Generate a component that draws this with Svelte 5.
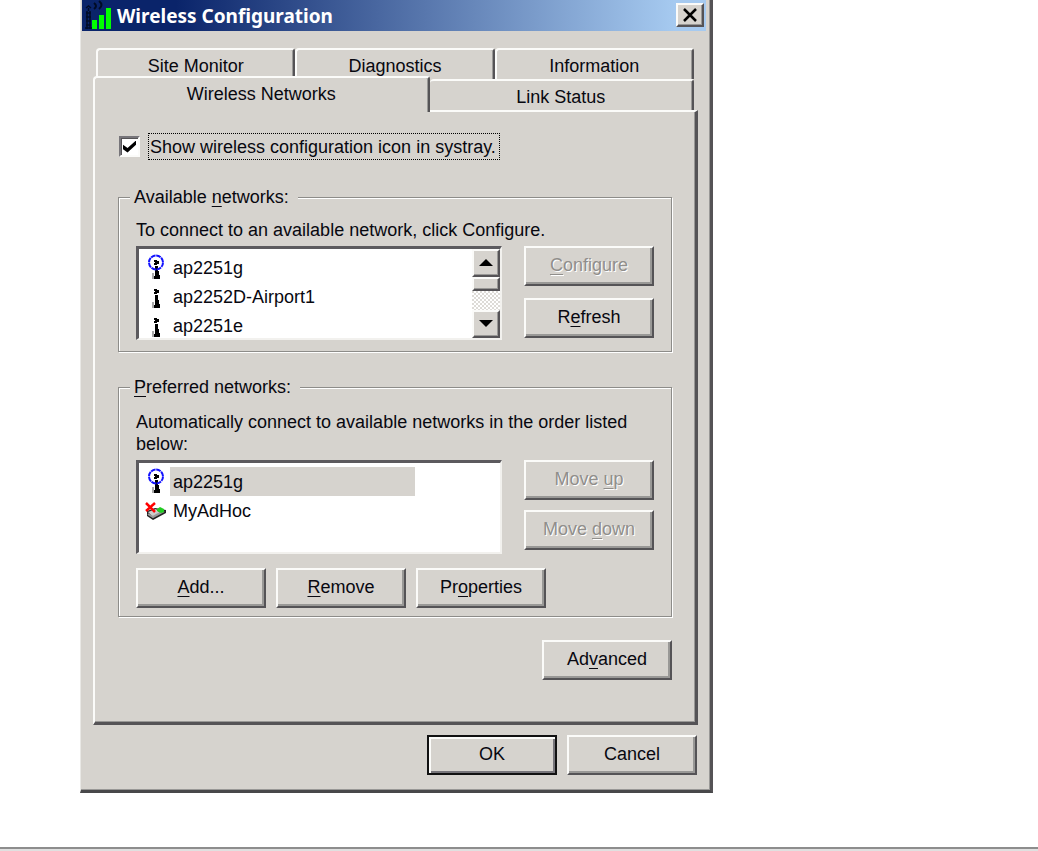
<script>
  let showIcon = $state(true);

  const backTabs = ['Site Monitor', 'Diagnostics', 'Information'];

  const available = [
    { name: 'ap2251g', icon: 'active' },
    { name: 'ap2252D-Airport1', icon: 'tower' },
    { name: 'ap2251e', icon: 'tower' }
  ];

  let preferred = [
    { name: 'ap2251g', icon: 'active' },
    { name: 'MyAdHoc', icon: 'adhoc' }
  ];

  let selected = $state(0);
</script>

{#snippet networkIcon(kind)}
  <svg class="icon" width="24" height="26" viewBox="0 0 24 26" aria-hidden="true">
    {#if kind === 'adhoc'}
      <path d="M3 13l8-3 11 2v3l-13 7-6-4z" fill="#222" />
      <path d="M4 14l8-3 4 4-7 4z" fill="#ccc" />
      <path d="M4 16l5 3 11-6" fill="none" stroke="#999" stroke-width="2" />
      <path d="M13 11l3-2 4 2v3l-3 1-4-2z" fill="#2c2" />
      <path d="M2 5l9 9M11 5l-9 8" stroke="#f00" stroke-width="2.500" />
    {:else}
      <path d="M10 5h3v1h2v3h-2v1h-3V8h1V7h-1z" fill="#000" />
      <path d="M11 11h3v5h1v4h1v4h-6v-3h1z" fill="#000" />
      <path d="M8 18h2v6H8z" fill="#aaa" />
      {#if kind === 'active'}
        <circle cx="12" cy="7.500" r="7" fill="none" stroke="#11f" stroke-width="2" stroke-dasharray="4.800 .700" />
      {/if}
    {/if}
  </svg>
{/snippet}

<div class="dialog" role="dialog" aria-labelledby="title">
  <header>
    <svg width="30" height="31" viewBox="0 0 30 31" aria-hidden="true">
      <path d="M5 29V11M8 29V11M4 13h5M4 17h5M4 21h5M4 25h5M3 28h7M6.500 11V8M4 8l2.500-2L9 8" fill="none" stroke="#000b25" stroke-width="1.500" />
      <path d="M12 3q4 3 0 6M17 1q5 4 0 8" fill="none" stroke="#000b25" stroke-width="2" />
      <path d="M10 20h5v9h-5zM17 15h5v14h-5zM24 8h5v21h-5z" fill="#0f0" />
    </svg>
    <h1 id="title">Wireless Configuration</h1>
    <button class="close" aria-label="Close">
      <svg width="16" height="14" viewBox="0 0 16 14"><path d="M2 1l12 12M14 1L2 13" stroke="#000" stroke-width="2.500" /></svg>
    </button>
  </header>

  <div class="tabs" role="tablist">
    <div class="row back">
      {#each backTabs as tab}
        <button class="tab" role="tab" aria-selected="false">{tab}</button>
      {/each}
    </div>
    <div class="row front">
      <button class="tab current" role="tab" aria-selected="true">Wireless Networks</button>
      <button class="tab link" role="tab" aria-selected="false">Link Status</button>
    </div>
  </div>

  <section class="panel" role="tabpanel">
    <div class="check">
      <input id="systray" type="checkbox" bind:checked={showIcon} />
      <label for="systray">Show wireless configuration icon in systray.</label>
    </div>

    <fieldset>
      <legend>Available <u>n</u>etworks:</legend>
      <p>To connect to an available network, click Configure.</p>
      <div class="columns">
        <div class="list">
          <ul>
            {#each available as net}
              <li>{@render networkIcon(net.icon)}<span class="name">{net.name}</span></li>
            {/each}
          </ul>
          <div class="scrollbar">
            <button aria-label="Scroll up">
              <svg width="14" height="8" viewBox="0 0 14 8"><path d="M7 0l7 7H0z" /></svg>
            </button>
            <div class="thumb"></div>
            <div class="track"></div>
            <button aria-label="Scroll down">
              <svg width="14" height="8" viewBox="0 0 14 8"><path d="M0 0h14L7 7z" /></svg>
            </button>
          </div>
        </div>
        <div class="side">
          <button class="btn" disabled><u>C</u>onfigure</button>
          <button class="btn">R<u>e</u>fresh</button>
        </div>
      </div>
    </fieldset>

    <fieldset class="preferred">
      <legend><u>P</u>referred networks:</legend>
      <p>Automatically connect to available networks in the order listed below:</p>
      <div class="columns">
        <div class="list">
          <ul>
            {#each preferred as net, i}
              <li>
                {@render networkIcon(net.icon)}
                <button class="name" class:selected={selected === i} onclick={() => (selected = i)}>{net.name}</button>
              </li>
            {/each}
          </ul>
        </div>
        <div class="side">
          <button class="btn" disabled>Move <u>u</u>p</button>
          <button class="btn" disabled>Move <u>d</u>own</button>
        </div>
      </div>
      <div class="actions">
        <button class="btn"><u>A</u>dd...</button>
        <button class="btn"><u>R</u>emove</button>
        <button class="btn">Pr<u>o</u>perties</button>
      </div>
    </fieldset>

    <div class="advanced">
      <button class="btn">Ad<u>v</u>anced</button>
    </div>
  </section>

  <footer>
    <button class="btn default">OK</button>
    <button class="btn">Cancel</button>
  </footer>
</div>

<hr />

<style>
  :global(body) {
    background: #fff;
  }

  .dialog {
    --face: #d6d3ce;
    --light: #fbfbf9;
    --shade: #999896;
    --dark: #555356;

    box-sizing: border-box;
    min-width: 560px;
    margin: 0 325px 0 80px;
    border-left: 1px solid #e9e8e5;
    border-right: 3px solid var(--dark);
    border-bottom: 3px solid #48484a;
    box-shadow: inset -1px -1px var(--shade);
    background: var(--face);
    color: #080810;
    font: 18px/22px "Liberation Sans", Arial, sans-serif;
  }

  button {
    box-sizing: border-box;
    margin: 0;
    padding: 0;
    color: inherit;
    font: inherit;
  }

  u {
    text-decoration-thickness: 1px;
    text-underline-offset: 3px;
    text-decoration-skip-ink: none;
  }

  header {
    display: flex;
    align-items: center;
    height: 31px;
    margin: 0 4px 0 1px;
    background: linear-gradient(90deg, #0a246a 15%, #a6caf0 95%);
  }

  h1 {
    flex: 1;
    margin: 0 0 0 5px;
    color: #fff;
    font: bold 19px/30px "Noto Sans", sans-serif;
  }

  .close {
    display: grid;
    place-items: center;
    width: 28px;
    height: 24px;
    margin: 0 2px 2px 0;
    border: 2px solid;
    border-color: var(--light) var(--dark) var(--dark) var(--light);
    background: var(--face);
    box-shadow: inset -1px -1px var(--shade);
  }

  .tabs {
    margin: 17px 13px 0 12px;
  }

  .row {
    display: flex;
    height: 31px;
  }

  .back {
    padding: 0 3px;
  }

  .front {
    padding-right: 3px;
  }

  .tab {
    flex: 1;
    padding-top: 3px;
    border: solid;
    border-width: 2px 2px 0;
    border-color: var(--light) var(--dark) var(--light) var(--light);
    border-radius: 4px 3px 0 0;
    background: var(--face);
    box-shadow: inset -1px 0 var(--shade);
  }

  .current {
    position: relative;
    flex: 336;
    height: 36px;
    margin-top: -3px;
    padding: 0 0 3px;
  }

  .link {
    flex: 265;
    border-left: 0;
  }

  .panel {
    margin: 0 12px 0 12px;
    padding: 21px 23px 42px;
    border: solid;
    border-width: 2px 3px 3px 2px;
    border-color: var(--light) var(--dark) var(--dark) var(--light);
    box-shadow: inset -1px -1px var(--shade);
  }

  .check {
    display: flex;
    align-items: center;
    gap: 8px;
    margin-left: 1px;
  }

  .check input {
    appearance: none;
    display: grid;
    place-items: center;
    width: 21px;
    height: 21px;
    margin: 0;
    border: 2px solid;
    border-color: #77757a var(--light) var(--light) #77757a;
    background: #fff;
    box-shadow: inset 1px 1px var(--dark);
  }

  .check input:checked::before {
    content: "";
    width: 13px;
    height: 12px;
    background: #000;
    clip-path: polygon(0 35%, 35% 62%, 100% 0, 100% 35%, 35% 100%, 0 72%);
  }

  label {
    padding: 2px 3px 1px 1px;
    border: 1px dotted #000;
  }

  fieldset {
    min-width: 0;
    margin: 24px 0 0;
    padding: 11px 17px;
    border: 1px solid #8d8c89;
    box-shadow: 1px 1px #fff, inset 1px 1px #fff;
  }

  legend {
    margin-left: -6px;
    padding: 0 9px 0 4px;
    background: var(--face);
  }

  .check + fieldset {
    margin-top: 26px;
  }

  .preferred {
    padding: 13px 17px 8px;
  }

  p {
    margin: 0 0 5px;
  }

  .columns {
    display: flex;
    gap: 22px;
  }

  .list {
    display: flex;
    flex: 1;
    box-sizing: border-box;
    height: 94px;
    min-width: 0;
    border: solid;
    border-width: 3px 2px 2px 3px;
    border-color: #5c5a5e #f2f1ee #f2f1ee #5c5a5e;
    background: #fff;
  }

  ul {
    flex: 1;
    margin: 0;
    padding: 4px 0 0 5px;
    overflow: hidden;
    list-style: none;
  }

  li {
    display: flex;
    align-items: center;
    height: 29px;
  }

  .icon {
    flex: none;
    margin-right: 2px;
    overflow: visible;
  }

  .name {
    width: 245px;
    height: 29px;
    padding: 0 3px;
    border: 0;
    background: none;
    line-height: 31px;
    text-align: left;
  }

  .selected {
    background: var(--face);
  }

  .scrollbar {
    display: flex;
    flex-direction: column;
    width: 28px;
  }

  .scrollbar button,
  .thumb {
    display: grid;
    place-items: center;
    box-sizing: border-box;
    height: 28px;
    border: 2px solid;
    border-color: var(--light) var(--dark) var(--dark) var(--light);
    background: var(--face);
    box-shadow: inset -1px -1px var(--shade);
  }

  .scrollbar .thumb {
    height: 14px;
  }

  .track {
    flex: 1;
    background: repeating-conic-gradient(#fff 0 25%, #dddbd7 0 50%) 0 0 / 4px 4px;
  }

  .side {
    display: flex;
    flex-direction: column;
    gap: 12px;
  }

  .preferred .side {
    gap: 10px;
  }

  .btn {
    width: 130px;
    height: 40px;
    padding-bottom: 2px;
    border: 2px solid;
    border-color: var(--light) var(--dark) var(--dark) var(--light);
    background: var(--face);
    box-shadow: inset -2px -2px var(--shade);
  }

  .btn:disabled {
    color: #908e8b;
    text-shadow: 1px 1px #fff;
  }

  .default {
    border-color: #111;
    box-shadow: inset 2px 2px var(--light), inset -2px -2px #77757a;
  }

  .actions {
    display: flex;
    gap: 10px;
    margin-top: 14px;
  }

  .advanced {
    display: flex;
    justify-content: flex-end;
    margin-top: 23px;
  }

  footer {
    display: flex;
    justify-content: flex-end;
    gap: 10px;
    padding: 10px 13px 15px;
  }

  hr {
    height: 2px;
    margin: 54px 0 0;
    border: solid;
    border-width: 2px 0 0;
    border-color: #8d8d8d;
    background: #e0e0e0;
  }
</style>
